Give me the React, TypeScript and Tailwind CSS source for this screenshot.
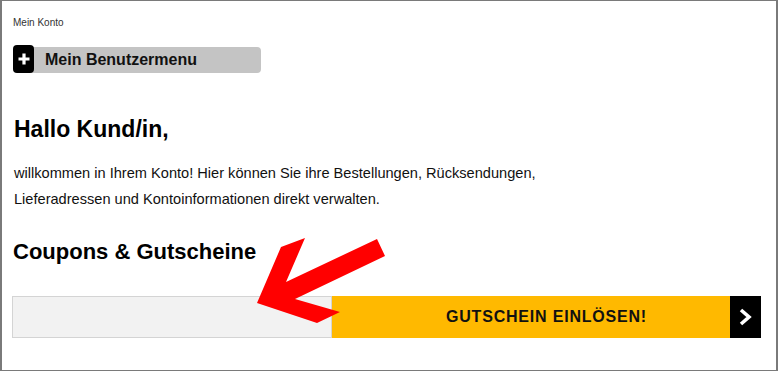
import React from 'react';

const font = { fontFamily: '"Liberation Sans", Arial, sans-serif' };

const Arrow: React.FC = () => (
  <svg
    className="pointer-events-none absolute left-0 top-0"
    width="778"
    height="371"
    viewBox="0 0 778 371"
  >
    <polygon
      points="255,302 279,246 303,237 284,281 375,238 383,255 293,298 338,311 315,322"
      fill="#ff0000"
    />
  </svg>
);

export default function App() {
  return (
    <div
      style={font}
      className="relative h-[371px] w-[778px] overflow-hidden border-y border-l-2 border-r-2 border-[#7a7a7a] bg-white text-black"
    >
      <div className="px-[11px] pt-[15px]">
        <p className="text-[10px] leading-[13px] text-[#333]">Mein Konto</p>

        <button className="mt-[16px] flex h-[28px] w-[248px] items-end">
          <span className="z-10 flex h-[28px] w-[21px] items-center justify-center rounded-[4px] bg-black">
            <svg width="14" height="14" viewBox="0 0 14 14">
              <path d="M7 1.5v11M1.5 7h11" stroke="#fff" strokeWidth="3.2" />
            </svg>
          </span>
          <span className="-ml-[6px] flex h-[26px] flex-1 items-center rounded-r-[4px] bg-[#c4c4c4] pl-[17px] text-[16px] font-bold leading-none text-[#111]">
            Mein Benutzermenu
          </span>
        </button>

        <h1 className="ml-px mt-[43px] text-[23px] font-bold leading-[26px]">Hallo Kund/in,</h1>

        <p className="ml-px mt-[18px] text-[14.6px] leading-[26px] text-[#111]">
          willkommen in Ihrem Konto! Hier können Sie ihre Bestellungen, Rücksendungen,
          <br />
          Lieferadressen und Kontoinformationen direkt verwalten.
        </p>

        <h2 className="mt-[28px] text-[22px] font-bold leading-[24px]">Coupons &amp; Gutscheine</h2>

        <div className="-ml-px mt-[32px] flex h-[42px] w-[749px]">
          <input
            type="text"
            className="h-full w-[320px] border border-[#d4d4d4] bg-[#f2f2f2] outline-none"
          />
          <button className="relative flex h-full flex-1 items-center justify-center bg-[#ffb900]">
            <span className="text-[16px] font-bold tracking-[0.8px] text-[#111]">
              GUTSCHEIN EINLÖSEN!
            </span>
            <span className="absolute right-0 top-0 flex h-full w-[31px] items-center justify-center bg-black">
              <svg width="16" height="20" viewBox="0 0 16 20">
                <path d="M3 3l8 7-8 7" stroke="#fff" strokeWidth="3.6" fill="none" />
              </svg>
            </span>
          </button>
        </div>
      </div>
      <Arrow />
    </div>
  );
}
